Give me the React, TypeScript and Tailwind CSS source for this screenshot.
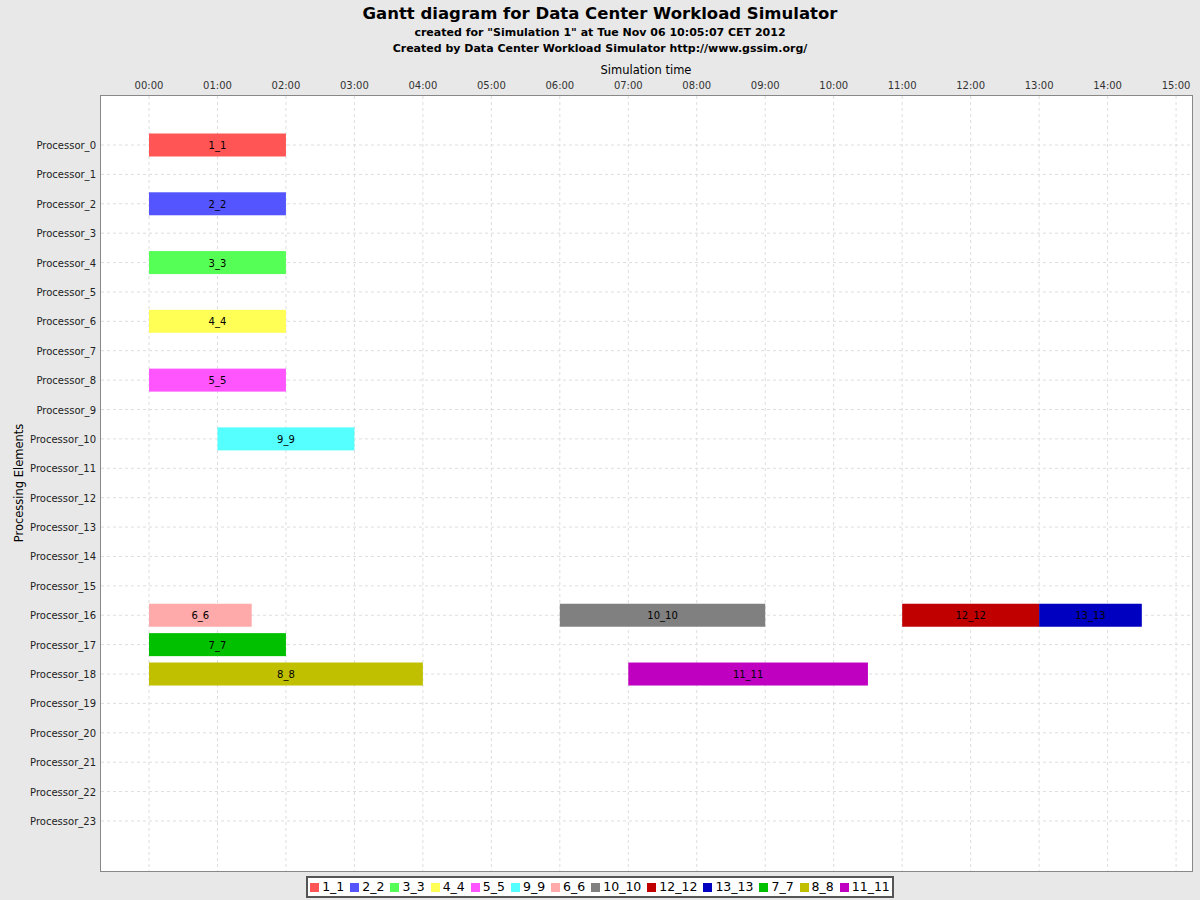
const X0 = 149, PX = 68.47, Y0 = 145, DY = 29.39, OFF = 60;
const bars = [
  [0, 0, 2, "1_1", "#ff5555"], [2, 0, 2, "2_2", "#5555ff"], [4, 0, 2, "3_3", "#55ff55"],
  [6, 0, 2, "4_4", "#ffff55"], [8, 0, 2, "5_5", "#ff55ff"], [10, 1, 3, "9_9", "#55ffff"],
  [16, 0, 1.5, "6_6", "#ffaaaa"], [16, 6, 9, "10_10", "#808080"], [16, 11, 13, "12_12", "#c00000"],
  [16, 13, 14.5, "13_13", "#0000c0"], [17, 0, 2, "7_7", "#00c000"], [18, 0, 4, "8_8", "#c0c000"],
  [18, 7, 10.5, "11_11", "#c000c0"],
] as const;
const legend = [["1_1","#ff5555"],["2_2","#5555ff"],["3_3","#55ff55"],["4_4","#ffff55"],["5_5","#ff55ff"],["9_9","#55ffff"],["6_6","#ffaaaa"],["10_10","#808080"],["12_12","#c00000"],["13_13","#0000c0"],["7_7","#00c000"],["8_8","#c0c000"],["11_11","#c000c0"]];
const f = '"DejaVu Sans", sans-serif';
export default function App() {
  const hrs = Array.from({ length: 16 }, (_, i) => i);
  const rows = Array.from({ length: 24 }, (_, i) => i);
  return (
    <div className="w-[1200px] h-[900px] bg-[#e8e8e8] flex flex-col items-center overflow-hidden text-black" style={{ fontFamily: f }}>
      <div className="h-[25px] text-[16.5px] font-bold leading-[25px] pt-[1px]">Gantt diagram for Data Center Workload Simulator</div>
      <div className="text-[11px] font-bold leading-[16px]">created for "Simulation 1" at Tue Nov 06 10:05:07 CET 2012</div>
      <div className="text-[11px] font-bold leading-[16px]">Created by Data Center Workload Simulator http://www.gssim.org/</div>
      <svg width="1200" height="815" className="block mt-[3px]" style={{ fontFamily: f }}>
        <text x="646" y="14" fontSize="11.5" textAnchor="middle">Simulation time</text>
        <rect x="100.5" y={95.5 - OFF} width="1092" height="776" fill="#fff" stroke="#888" />
        {hrs.map(h => (
          <g key={h}>
            <text x={X0 + h * PX} y={89 - OFF} fontSize="10" textAnchor="middle" fill="#333">{String(h).padStart(2, "0")}:00</text>
            <line x1={X0 + h * PX} x2={X0 + h * PX} y1={96 - OFF} y2={871 - OFF} stroke="#ddd" strokeDasharray="3 3" />
          </g>
        ))}
        {rows.map(r => (
          <g key={r}>
            <line x1="101" x2="1192" y1={Y0 + r * DY - OFF} y2={Y0 + r * DY - OFF} stroke="#ddd" strokeDasharray="3 3" />
            <text x="96" y={Y0 + r * DY - OFF + 4} fontSize="10" textAnchor="end" fill="#222">Processor_{r}</text>
          </g>
        ))}
        {bars.map(([r, s, e, l, c]) => {
          const y = Y0 + r * DY - OFF;
          return (
            <g key={l}>
              <rect x={X0 + s * PX} y={y - 11.5} width={(e - s) * PX} height="23" fill={c} />
              <text x={X0 + ((s + e) / 2) * PX} y={y + 4} fontSize="10" textAnchor="middle">{l}</text>
            </g>
          );
        })}
        <text transform={`translate(23 ${483 - OFF}) rotate(-90)`} fontSize="11.5" textAnchor="middle">Processing Elements</text>
      </svg>
      <div className="mt-[1px] flex items-center gap-[6px] bg-white border-2 border-[#555] px-[2px] h-[22px] text-[12.5px]">
        {legend.map(([l, c]) => (
          <div key={l} className="flex items-center gap-[3px]">
            <span className="w-[9px] h-[9px] inline-block" style={{ background: c }} />
            <span>{l}</span>
          </div>
        ))}
      </div>
    </div>
  );
}
